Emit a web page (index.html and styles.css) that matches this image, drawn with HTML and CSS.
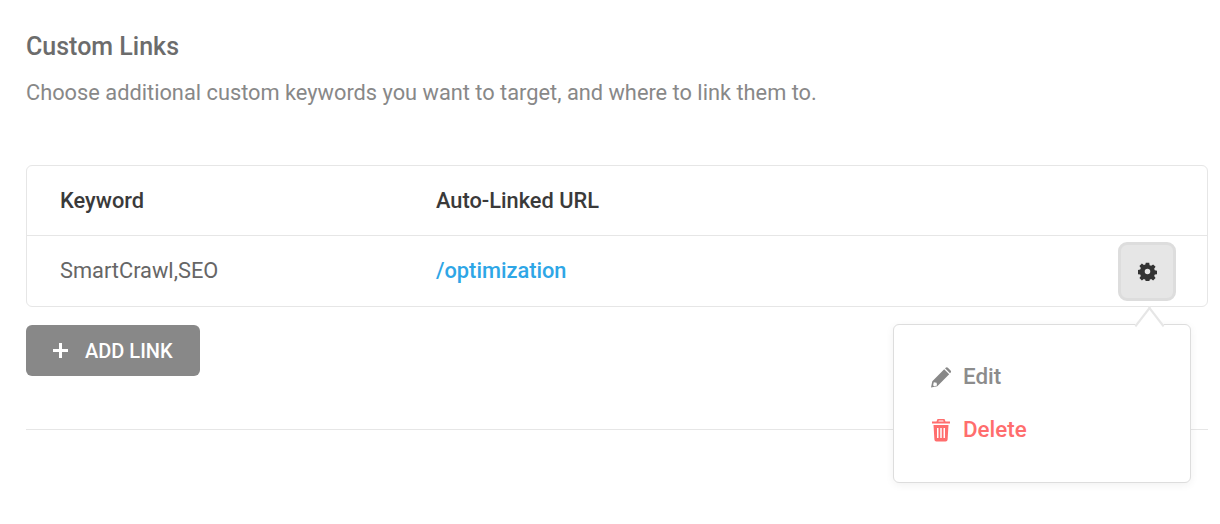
FILE: index.html
```html
<!DOCTYPE html>
<html lang="en">
<head>
  <meta charset="UTF-8">
  <title>Custom Links</title>
  <link rel="stylesheet" href="styles.css">
</head>
<body>
  <div class="section">
    <h2 class="section--title">Custom Links</h2>
    <p class="section--desc">Choose additional custom keywords you want to target, and where to link them to.</p>

    <div class="links">
      <div class="links--row links--head">
        <div class="links--keyword">Keyword</div>
        <div class="links--url">Auto-Linked URL</div>
      </div>
      <div class="links--row links--item">
        <div class="links--keyword">SmartCrawl,SEO</div>
        <div class="links--url"><a href="#">/optimization</a></div>
        <button type="button" class="gear-btn" aria-label="Options">
          <svg width="19" height="19" viewBox="0 0 24 24"><path fill="#333" fill-rule="evenodd" d="M9.800 1h4.400l.5 3 1.900.8 2.500-1.800 3.100 3.100-1.800 2.500.8 1.900 3 .5v4.400l-3 .5-.8 1.900 1.800 2.500-3.100 3.100-2.500-1.800-1.900.8-.5 3H9.800l-.5-3-1.900-.8-2.500 1.800-3.100-3.100 1.800-2.500-.8-1.900-3-.5V10l3-.5.8-1.900L1.800 5.100 4.900 2l2.500 1.800 1.900-.8zM12 8.500a3.500 3.500 0 1 0 0 7 3.500 3.500 0 0 0 0-7z"/></svg>
        </button>
      </div>

      <div class="menu">
        <a class="menu--item" href="#">
          <svg width="22" height="22" viewBox="0 0 22 22"><path fill="#888" fill-rule="evenodd" d="M1 21.500l1.300-6.300L14.200 3.300l5 5L7.300 20.200zM3.800 16.300l-.7 2.900 1 1 2.900-.7-.4-2.800zM15.700 1.800a1.600 1.600 0 0 1 2.200 0l2.700 2.700a1.600 1.600 0 0 1 0 2.200l-.6.600-5-5z"/></svg>
          Edit
        </a>
        <a class="menu--item menu--item-danger" href="#">
          <svg width="22" height="24" viewBox="0 0 22 24"><path fill="#ff6d6d" fill-rule="evenodd" d="M7.500 1h7l1 2.500H20v2H2v-2h4.500zM8.800 2.500l-.4 1h5.200l-.4-1zM3.500 7h15l-.9 14.500a2 2 0 0 1-2 1.900H6.400a2 2 0 0 1-2-1.900zM7 10v10h1.500V10zm3.250 0v10h1.500V10zM13.500 10v10H15V10z"/></svg>
          Delete
        </a>
      </div>
    </div>

    <button type="button" class="add-btn"><span class="add-btn--plus"></span>ADD LINK</button>
  </div>
</body>
</html>
```
FILE: styles.css
```css
html,body{margin: 0; padding: 0; background-color: #fff; height: 100%; overflow: hidden;}
*{box-sizing: border-box;}
body {
  font-family: Roboto, sans-serif;
  color: #666;
}
.section {
  margin: 0 12px 0 26px;
  padding: 32px 0 53px;
  border-bottom: 1px solid #e6e6e6;
}
.section--title {
  margin: 0;
  font-size: 25px;
  line-height: 30px;
  font-weight: 500;
  color: #6c6c6c;
}
.section--desc {
  margin: 16px 0 0;
  font-size: 21.8px;
  line-height: 30px;
  color: #888;
}
.links {
  position: relative;
  margin-top: 57px;
  border: 1px solid #e6e6e6;
  border-radius: 6px;
}
.links--row {
  display: flex;
  align-items: center;
  height: 70px;
  padding: 0 31px 0 33px;
  font-size: 21.8px;
  color: #666;
}
.links--head {
  height: 70px;
  border-bottom: 1px solid #e6e6e6;
  font-weight: 500;
  color: #3a3a3a;
}
.links--item .links--keyword,
.links--item .links--url {
  margin-bottom: 2px;
}
.links--keyword {
  width: 376px;
}
.links--url {
  flex: 1;
}
.links--url a {
  color: #2ea6e6;
  font-weight: 500;
  text-decoration: none;
}
.gear-btn {
  display: flex;
  align-items: center;
  justify-content: center;
  width: 58px;
  height: 59px;
  padding: 0;
  background-color: #e6e6e6;
  border: 3px solid #ddd;
  border-radius: 9px;
}
.menu {
  position: absolute;
  top: 158px;
  right: 16px;
  width: 298px;
  height: 159px;
  padding: 24px 36px;
  background-color: #fff;
  border: 1px solid #ddd;
  border-radius: 6px;
  box-shadow: 0 2px 8px rgba(0,0,0,0.06);
  z-index: 10;
}
.menu::before {
  content: "";
  position: absolute;
  top: -10px;
  right: 30px;
  width: 19px;
  height: 19px;
  background-color: #fff;
  border-top: 2px solid #e6e6e6;
  border-left: 2px solid #e6e6e6;
  transform: scaleY(1.3) rotate(45deg);
}
.menu--item {
  display: flex;
  align-items: center;
  gap: 11px;
  height: 53px;
  font-size: 22.4px;
  font-weight: 500;
  color: #8c8c8c;
  text-decoration: none;
}
.menu--item svg {
  margin-top: 2px;
}
.menu--item-danger {
  color: #ff6d6d;
}
.add-btn {
  display: flex;
  align-items: center;
  gap: 17px;
  margin-top: 18px;
  width: 174px;
  height: 51px;
  padding: 0 0 0 27px;
  background-color: #888;
  border: 0;
  border-radius: 6px;
  font-family: inherit;
  font-size: 20px;
  font-weight: 500;
  color: #fff;
}
.add-btn--plus {
  position: relative;
  width: 15px;
  height: 15px;
}
.add-btn--plus::before,
.add-btn--plus::after {
  content: "";
  position: absolute;
  background-color: #fff;
}
.add-btn--plus::before {
  left: 0; right: 0; top: 6px; height: 3px;
}
.add-btn--plus::after {
  top: 0; bottom: 0; left: 6px; width: 3px;
}
```
